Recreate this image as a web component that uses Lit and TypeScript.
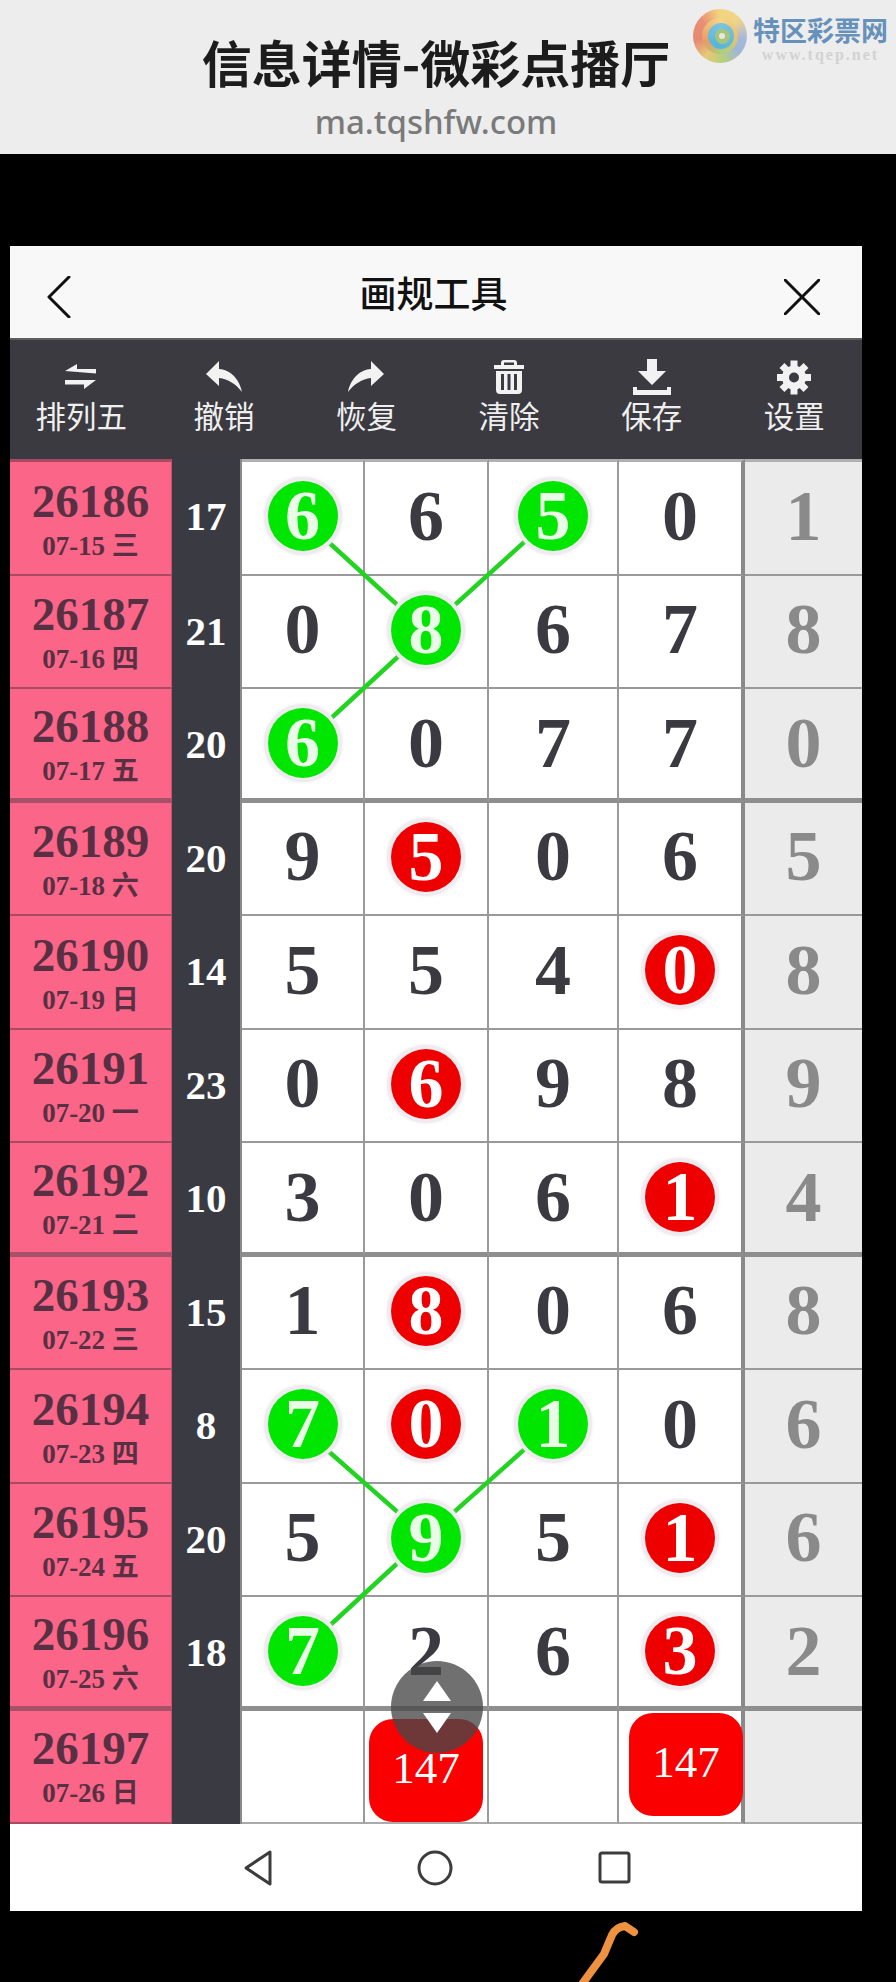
import { LitElement, html, css, svg } from "lit";
import { customElement } from "lit/decorators.js";

type Row = { id: string; date: string; sum: string; cells: string[]; tail: string };

const ROWS: Row[] = [
  { id: "26186", date: "07-15 三", sum: "17", cells: ["6g", "6", "5g", "0"], tail: "1" },
  { id: "26187", date: "07-16 四", sum: "21", cells: ["0", "8g", "6", "7"], tail: "8" },
  { id: "26188", date: "07-17 五", sum: "20", cells: ["6g", "0", "7", "7"], tail: "0" },
  { id: "26189", date: "07-18 六", sum: "20", cells: ["9", "5r", "0", "6"], tail: "5" },
  { id: "26190", date: "07-19 日", sum: "14", cells: ["5", "5", "4", "0r"], tail: "8" },
  { id: "26191", date: "07-20 一", sum: "23", cells: ["0", "6r", "9", "8"], tail: "9" },
  { id: "26192", date: "07-21 二", sum: "10", cells: ["3", "0", "6", "1r"], tail: "4" },
  { id: "26193", date: "07-22 三", sum: "15", cells: ["1", "8r", "0", "6"], tail: "8" },
  { id: "26194", date: "07-23 四", sum: "8", cells: ["7g", "0r", "1g", "0"], tail: "6" },
  { id: "26195", date: "07-24 五", sum: "20", cells: ["5", "9g", "5", "1r"], tail: "6" },
  { id: "26196", date: "07-25 六", sum: "18", cells: ["7g", "2", "6", "3r"], tail: "2" },
];

const ICONS = {
  swap: svg`<path d="M8 12 L20 5 L20 10 L39 10 L39 14.5 Z"/><path d="M8 21 L39 21 L27 30 L27 25.5 L8 25.5 Z"/>`,
  undo: svg`<path d="M6 15 L19 2 L19 10 C32 11 40 22 42 33 C36 25 28 20 19 19 L19 27 Z"/>`,
  redo: svg`<path d="M42 15 L29 2 L29 10 C16 11 8 22 6 33 C12 25 20 20 29 19 L29 27 Z"/>`,
  trash: svg`<path fill-rule="evenodd" d="M19 1 H29 Q32 1 32 4 V6 H39 V10 H9 V6 H16 V4 Q16 1 19 1 Z M19 3.5 V6 H29 V3.5 Z"/><path fill-rule="evenodd" d="M11 12 H37 V31 Q37 35 33 35 H15 Q11 35 11 31 Z M16 15 V31 H19 V15 Z M22.5 15 V31 H25.5 V15 Z M29 15 V31 H32 V15 Z"/>`,
  save: svg`<path d="M19 0 H29 V12 H38 L24 26 L10 12 H19 Z"/><path d="M5 28 H9 V31 H39 V28 H43 V36 H5 Z"/>`,
  gear: svg`<g transform="translate(24 18.5)"><path fill-rule="evenodd" d="M-12 0 A12 12 0 1 1 12 0 A12 12 0 1 1 -12 0 Z M-5 0 A5 5 0 1 0 5 0 A5 5 0 1 0 -5 0 Z"/>${[0, 45, 90, 135, 180, 225, 270, 315].map(
    (a) => svg`<rect x="-3.5" y="-17" width="7" height="8" transform="rotate(${a})"/>`
  )}</g>`,
};

const TOOLS: [keyof typeof ICONS, string][] = [
  ["swap", "排列五"],
  ["undo", "撤销"],
  ["redo", "恢复"],
  ["trash", "清除"],
  ["save", "保存"],
  ["gear", "设置"],
];

const LINES: [number, number, number, number][] = [
  [292, 59, 416, 172],
  [543, 57, 416, 172],
  [292, 286, 416, 172],
  [292, 969, 416, 1078],
  [543, 965, 416, 1078],
  [292, 1192, 416, 1078],
];

@customElement("app-root")
export class AppRoot extends LitElement {
  static styles = css`
    :host {
      display: block;
      position: relative;
      width: 896px;
      height: 1982px;
      overflow: hidden;
      background: #000;
      font-family: "Noto Sans CJK SC", "Noto Sans", sans-serif;
    }
    .top {
      position: relative;
      height: 154px;
      box-sizing: border-box;
      background: #ededed;
      padding: 31px 24px 0 0;
      display: flex;
      flex-direction: column;
      align-items: center;
      gap: 9px;
    }
    .top-title {
      font-size: 50px;
      line-height: 60px;
      font-weight: 700;
      color: #1c1c1c;
      white-space: nowrap;
    }
    .top-sub {
      font-family: "Noto Sans", sans-serif;
      font-size: 33px;
      line-height: 44px;
      font-weight: 500;
      color: #7a7a7a;
    }
    .wm {
      position: absolute;
      left: 693px;
      top: 9px;
      display: flex;
      gap: 6px;
      align-items: flex-start;
    }
    .logo {
      width: 54px;
      height: 54px;
      border-radius: 50%;
      display: grid;
      place-items: center;
      background: conic-gradient(#f2d67e 0deg, #efd38a 50deg, #a7b8dc 95deg, #9db7d8 130deg, #b9d07a 175deg, #e8c87a 215deg, #e58a72 260deg, #ea8f74 310deg, #f2d67e 360deg);
    }
    .logo i {
      display: grid;
      place-items: center;
      border-radius: 50%;
    }
    .ring1 {
      width: 36px;
      height: 36px;
      background: conic-gradient(#f3d58a 0deg, #eec06e 90deg, #a9cf84 170deg, #e99c62 250deg, #f3d58a 360deg);
    }
    .ring2 {
      width: 26px;
      height: 26px;
      background: conic-gradient(#7cc4dc 0deg, #56b4da 200deg, #7cc4dc 360deg);
      margin-left: 2px;
    }
    .ring3 {
      width: 15px;
      height: 15px;
      background: #a6c47c;
      margin-left: 2px;
    }
    .ring4 {
      width: 6px;
      height: 6px;
      background: #eae8de;
    }
    .wm-text { display: flex; flex-direction: column; align-items: center; margin-top: 6px; }
    .wm-name {
      font-size: 27px;
      line-height: 30px;
      font-weight: 700;
      color: #6691ba;
      white-space: nowrap;
    }
    .wm-url {
      font-family: "Liberation Serif", serif;
      font-size: 16px;
      line-height: 20px;
      font-weight: 700;
      letter-spacing: 2px;
      color: #d2d2d2;
      white-space: nowrap;
    }
    .panel {
      position: relative;
      margin: 92px 34px 0 10px;
      width: 852px;
    }
    .nav {
      height: 92px;
      background: #f8f8f8;
      display: grid;
      grid-template-columns: 1fr auto 1fr;
      align-items: center;
      padding: 0 42px 0 37px;
      box-sizing: border-box;
    }
    .nav svg { display: block; fill: none; stroke: #111; stroke-width: 3; stroke-linecap: round; stroke-linejoin: round; margin-top: 10px; }
    .nav .close { justify-self: end; }
    .nav-title { font-size: 37px; line-height: 44px; font-weight: 500; color: #111; }
    .tools {
      height: 121px;
      box-sizing: border-box;
      background: #3a3a40;
      border-top: 2px solid #5e5e5e;
      padding-top: 19px;
      display: grid;
      grid-template-columns: repeat(6, 142.6px);
      overflow: hidden;
    }
    .tool { display: flex; flex-direction: column; align-items: center; gap: 2px; }
    .tool svg { display: block; width: 48px; height: 36px; fill: #f2f2f2; }
    .tool span { font-size: 30.5px; line-height: 36px; color: #efefef; white-space: nowrap; }
    .grid {
      position: relative;
      display: grid;
      grid-template-columns: 162px 70px 123px 124px 130px 126px 117px;
      grid-template-rows: 116.5px repeat(11, 113.5px);
      font-family: "Liberation Serif", "Noto Sans CJK SC", serif;
      font-weight: 700;
    }
    .label {
      background: #fb6587;
      box-sizing: border-box;
      border-bottom: 2px solid #a94a63;
      border-right: 1px solid #c9506d;
      display: flex;
      flex-direction: column;
      align-items: center;
      justify-content: center;
      color: #573044;
    }
    .label.first { border-top: 3px solid #a94a63; }
    .label.thick { border-bottom: 5px solid #a8506a; }
    .label.final { padding-bottom: 3px; }
    .label b { font-size: 47px; line-height: 56px; }
    .label i { font-style: normal; font-size: 27px; line-height: 34px; white-space: nowrap; }
    .sum {
      background: #3a3a42;
      color: #fff;
      font-size: 41px;
      padding-bottom: 3px;
      display: flex;
      align-items: center;
      justify-content: center;
      border-right: 2px solid #8a8a8a;
      box-sizing: border-box;
    }
    .cell {
      box-sizing: border-box;
      background: #fff;
      border-bottom: 2px solid #999;
      border-right: 2px solid #9a9a9a;
      padding-bottom: 3px;
      display: flex;
      align-items: center;
      justify-content: center;
      font-size: 72px;
      color: #3a3a40;
    }
    .cell.first { border-top: 3px solid #b0b0b0; }
    .cell.thick { border-bottom: 5px solid #8e8e8e; padding-bottom: 0; }
    .cell.end { border-right: 4px solid #8a8a8a; }
    .cell.tail { background: #ebebeb; color: #8a8a8a; border-right: 0; }
    .cell.last { border-bottom: 2px solid #aaa; padding: 0; align-items: flex-start; }
    .ball {
      position: relative;
      z-index: 2;
      width: 70px;
      height: 70px;
      border-radius: 50%;
      display: flex;
      align-items: center;
      justify-content: center;
      box-shadow: 0 0 0 4px #eeecee, 0 0 3px 4px rgba(225, 205, 225, 0.6);
      font-size: 70px;
      line-height: 1;
      color: #eafbe8;
    }
    .ball.g { background: #00e600; }
    .ball.r { background: #ee0000; color: #fff; }
    .badge {
      position: relative;
      z-index: 1;
      flex: none;
      width: 114px;
      height: 103px;
      box-sizing: border-box;
      padding-bottom: 5px;
      border-radius: 24px;
      background: #fb0000;
      color: #fff;
      font-size: 45px;
      font-weight: 400;
      display: flex;
      align-items: center;
      justify-content: center;
    }
    .badge.a { margin-top: 8px; }
    .badge.b { margin-top: 2px; margin-left: 12px; }
    .links {
      position: absolute;
      left: 0;
      top: 0;
      width: 852px;
      height: 1365px;
      z-index: 1;
      pointer-events: none;
    }
    .links line { stroke: #22d322; stroke-width: 4.5; }
    .fab {
      position: absolute;
      left: 381px;
      top: 1415px;
      z-index: 3;
      width: 92px;
      height: 92px;
      border-radius: 50%;
      background: rgba(72, 72, 72, 0.78);
      display: flex;
      align-items: center;
      justify-content: center;
    }
    .fab svg { display: block; fill: #fff; }
    .bar {
      height: 87px;
      background: #fff;
      display: flex;
      align-items: center;
      padding-left: 234px;
      gap: 145px;
    }
    .bar svg { display: block; fill: none; stroke: #3c3c3c; stroke-width: 3; stroke-linejoin: round; }
    .stroke {
      position: absolute;
      left: 560px;
      top: 1910px;
      width: 90px;
      height: 72px;
      fill: none;
      stroke: #ef9240;
      stroke-width: 8;
      stroke-linecap: round;
      stroke-linejoin: round;
    }
  `;

  private cell(v: string, cls: string) {
    const kind = v.length > 1 ? v[1] : "";
    const d = v[0];
    return html`<div class="cell ${cls}">
      ${kind ? html`<span class="ball ${kind}">${d}</span>` : d}
    </div>`;
  }

  render() {
    return html`
      <div class="top">
        <div class="top-title">信息详情-微彩点播厅</div>
        <div class="top-sub">ma.tqshfw.com</div>
        <div class="wm">
          <div class="logo">
            <i class="ring1"><i class="ring2"><i class="ring3"><i class="ring4"></i></i></i></i>
          </div>
          <div class="wm-text">
            <div class="wm-name">特区彩票网</div>
            <div class="wm-url">www.tqep.net</div>
          </div>
        </div>
      </div>

      <div class="panel">
        <div class="nav">
          <svg width="24" height="42" viewBox="0 0 24 42"><path d="M22 1 L2 21 L22 41" /></svg>
          <div class="nav-title">画规工具</div>
          <svg class="close" width="36" height="36" viewBox="0 0 36 36"><path d="M1 1 L35 35 M35 1 L1 35" /></svg>
        </div>

        <div class="tools">
          ${TOOLS.map(
            ([ic, label]) => html`<div class="tool">
              <svg viewBox="0 0 48 36">${ICONS[ic]}</svg>
              <span>${label}</span>
            </div>`
          )}
        </div>

        <div class="grid">
          ${ROWS.map((r, i) => {
            const cls = `${i === 0 ? "first" : ""} ${i === 2 || i === 6 || i === 10 ? "thick" : ""}`;
            return html`
              <div class="label ${cls}"><b>${r.id}</b><i>${r.date}</i></div>
              <div class="sum">${r.sum}</div>
              ${r.cells.map((c, j) => this.cell(c, `${cls} ${j === 3 ? "end" : ""}`))}
              ${this.cell(r.tail, `${cls} tail`)}
            `;
          })}
          <div class="label final"><b>26197</b><i>07-26 日</i></div>
          <div class="sum"></div>
          <div class="cell last"></div>
          <div class="cell last"><div class="badge a">147</div></div>
          <div class="cell last"></div>
          <div class="cell last end"><div class="badge b">147</div></div>
          <div class="cell last tail"></div>

          <svg class="links" viewBox="0 0 852 1365">
            ${LINES.map(([a, b, c, d]) => svg`<line x1=${a} y1=${b} x2=${c} y2=${d} />`)}
          </svg>
        </div>

        <div class="fab">
          <svg width="30" height="54" viewBox="0 0 30 54">
            <path d="M15 1 L29 21 H1 Z" />
            <path d="M1 33 H29 L15 53 Z" />
          </svg>
        </div>

        <div class="bar">
          <svg width="28" height="36" viewBox="0 0 28 36"><path d="M26 2 V34 L2 18 Z" /></svg>
          <svg width="36" height="36" viewBox="0 0 36 36"><circle cx="18" cy="18" r="16" /></svg>
          <svg width="33" height="33" viewBox="0 0 33 33"><rect x="2" y="2" width="29" height="29" rx="2" /></svg>
        </div>
      </div>

      <svg class="stroke" viewBox="0 0 90 72">
        <path d="M22 74 L44 44 L52 25 Q56 17 65 16 L74 22" />
      </svg>
    `;
  }
}
